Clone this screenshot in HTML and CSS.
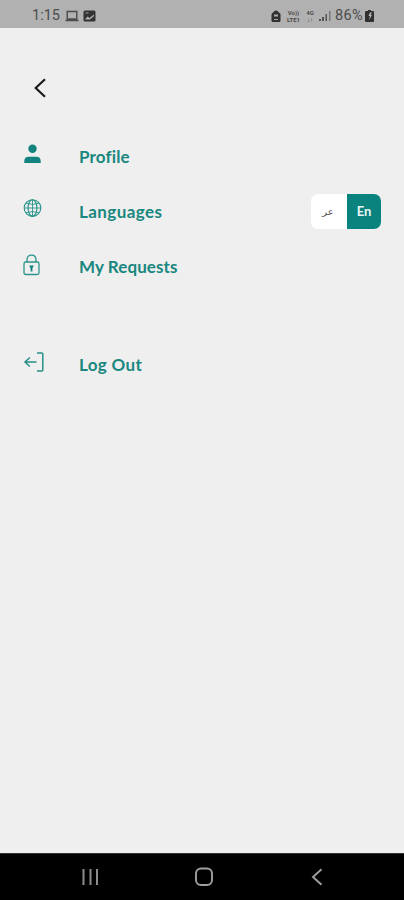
FILE: index.html
```html
<!DOCTYPE html>
<html lang="en">
<head>
<meta charset="utf-8">
<title>Menu</title>
<link rel="stylesheet" href="styles.css">
</head>
<body>
<header class="status">
  <span class="clock">1:15</span>
  <svg class="laptop" width="14" height="12" viewBox="0 0 14 12" fill="none" stroke="#4c4c4c" stroke-width="1.400"><path d="M2.200 1.500h9.600v7.500H2.200zM.5 10.500h13"/></svg>
  <svg class="photo" width="13" height="12" viewBox="0 0 13 12"><rect x=".5" y=".5" width="12" height="11" rx="1.500" fill="#333"/><path d="M2 9.500l2.500-3 2 1.500L11 4.500v1.500L7 9.500z" fill="#b0b0b0"/><path d="M2.500 2.500h3v1h-3z" fill="#999"/></svg>
  <span class="grow"></span>
  <svg class="alarm" width="10" height="12" viewBox="0 0 10 12"><path d="M3 1.500Q5-.5 7 1.500L9.500 4v6.500Q9.500 12 8 12H2Q.5 12 .5 10.500V4z" fill="#303030"/><path d="M3 4.500h4v2H3zM3 9h4v1H3z" fill="#aaa"/></svg>
  <span class="tiny volte"><span>Vo))</span><span>LTE1</span></span>
  <span class="tiny net"><span>4G</span><span>↓↑</span></span>
  <svg class="signal" width="12" height="12" viewBox="0 0 12 12" fill="#555"><path d="M0 9h2v2H0zM3 7h2v4H3zM6.500 4H8v7H6.500z"/><path d="M10 1h1.500v10H10z" fill="#777"/></svg>
  <span class="percent">86%</span>
  <svg class="battery" width="9" height="12" viewBox="0 0 9 12"><path d="M3 0h3v1h2q1 0 1 1v9q0 1-1 1H1q-1 0-1-1V2q0-1 1-1h2z" fill="#303030"/><path d="M5 2.500L3.500 6H5L4 10l3-5H5.500L7 2.500z" fill="#bbb"/></svg>
</header>
<main class="content">
  <svg class="back" width="14" height="20" viewBox="0 0 14 20" fill="none" stroke="#1b1b1b" stroke-width="2.200"><path d="M12 1.200L2.700 10l9.300 8.800"/></svg>
  <nav class="menu">
    <a class="item"><span class="icon"><svg width="18" height="20" viewBox="0 0 18 20" fill="#12837f"><circle cx="9.500" cy="4.800" r="4.200"/><path d="M1.300 19v-2q0-4.300 4.500-4.300h7.200q4.700 0 4.700 4.300v2z"/></svg></span><span class="label profile">Profile</span></a>
    <a class="item"><span class="icon globe"><svg width="19" height="20" viewBox="0 0 19 20" fill="none" stroke="#2b948b" stroke-width="1.150"><circle cx="9.500" cy="10" r="8.300"/><ellipse cx="9.500" cy="10" rx="4.400" ry="8.300"/><path d="M9.500 1.700v16.600M1.200 10h16.600M3 5.200q6.500 2.500 13 0M3 14.800q6.500-2.500 13 0" stroke-width=".9"/></svg></span><span class="label languages">Languages</span>
      <span class="toggle"><span class="ar" lang="ar">عر</span><span class="en">En</span></span></a>
    <a class="item"><span class="icon lock"><svg width="18" height="22" viewBox="0 0 18 22" fill="none" stroke="#2b948b" stroke-width="1.300"><rect x="1" y="8" width="15" height="12.500" rx="1.800"/><path d="M4 8V6q0-4.800 4.500-4.800T13 6v2"/><path d="M6.200 11.500h4.600l-1.400 3v3H7.600v-3z" fill="#12837f" stroke="none"/></svg></span><span class="label requests">My Requests</span></a>
    <a class="item logout"><span class="icon exit"><svg width="21" height="20" viewBox="0 0 21 20" fill="none" stroke="#278f87" stroke-width="1.500"><path d="M14 1h4.800q1 0 1 1v16q0 1-1 1H14M13.500 10H2M6.800 5.500L2 10l4.800 4.500"/></svg></span><span class="label out">Log Out</span></a>
  </nav>
</main>
<footer class="navbar">
  <svg width="18" height="18" viewBox="0 0 18 18" fill="#8c8c8c"><path d="M1.500 1h2v16h-2zM8.500 1h2v16h-2zM15 1h2v16h-2z"/></svg>
  <svg width="20" height="20" viewBox="0 0 20 20" fill="none" stroke="#a0a0a0" stroke-width="1.900"><rect x="1" y="1.500" width="16" height="16.500" rx="5"/></svg>
  <svg width="14" height="18" viewBox="0 0 14 18" fill="none" stroke="#a0a0a0" stroke-width="1.900"><path d="M11.500 1.200L3 9l8.500 7.800"/></svg>
</footer>
</body>
</html>
```
FILE: styles.css
```css
* { box-sizing: border-box; }
body {
  margin: 0;
  height: 900px;
  display: flex;
  flex-direction: column;
  background: #efefef;
  font-family: Lato, "DejaVu Sans", sans-serif;
  overflow: hidden;
}
svg { display: block; flex: none; }
.status {
  height: 28px;
  display: flex;
  align-items: center;
  padding: 3px 30px 0 32px;
  background: #b1b1b1;
  color: #4c4c4c;
}
.clock { width: 33px; font: 14.5px/20px Roboto, sans-serif; }
.photo { margin-left: 4px; }
.grow { flex: 1; }
.tiny {
  display: flex;
  flex-direction: column;
  font: 700 6px/7px Roboto, sans-serif;
  text-align: center;
}
.volte { width: 15px; margin-left: 5px; }
.net { width: 10px; margin-left: 4px; }
.signal { margin-left: 4px; }
.percent { width: 29px; margin-left: 4px; font: 14.5px/20px Roboto, sans-serif; letter-spacing: 0.3px; }
.battery { margin-left: 1px; }
.content { flex: 1; padding: 50px 23px 0 23px; }
.back { margin-left: 10px; }
.menu { display: flex; flex-direction: column; margin-top: 30px; }
.item {
  height: 55.4px;
  display: flex;
  align-items: center;
  color: #198780;
}
.icon { width: 56px; padding-bottom: 4px; }
.globe { padding-bottom: 6px; }
.lock { padding-bottom: 3px; }
.exit { padding-bottom: 4px; }
.label { padding-top: 1px; font-size: 17px; line-height: 24px; font-weight: 700; }
.profile { padding-top: 2px; letter-spacing: 0.15px; }
.languages { letter-spacing: 0.42px; }
.requests { letter-spacing: 0.08px; }
.out { padding-top: 2px; letter-spacing: 0.35px; }
.logout { margin-top: 42px; }
.toggle {
  display: flex;
  width: 70px;
  height: 35px;
  margin-left: auto;
  border-radius: 7px;
  overflow: hidden;
  background: #fff;
}
.toggle span { width: 36px; line-height: 35px; text-align: center; }
.toggle .ar { padding-right: 2px; color: #555; font: 10px/35px "DejaVu Sans", sans-serif; }
.toggle .en { width: 34px; background: #0a827e; color: #e9f7f5; font-size: 13px; font-weight: 700; }
.navbar {
  height: 47px;
  display: flex;
  align-items: center;
  justify-content: space-between;
  padding: 0 80px 0 81px;
  background: #000;
  border-top: 1px solid #333;
}
```
